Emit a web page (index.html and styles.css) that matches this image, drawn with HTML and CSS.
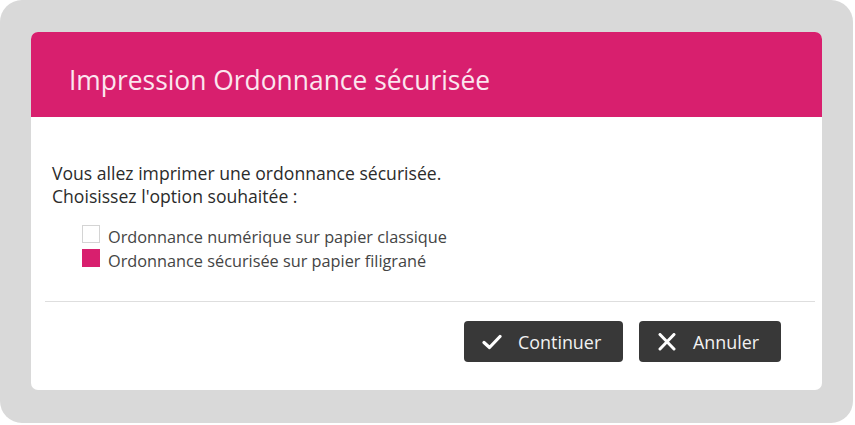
FILE: index.html
```html
<!DOCTYPE html>
<html lang="fr">
<head>
<meta charset="utf-8">
<title>Impression Ordonnance sécurisée</title>
<link rel="stylesheet" href="styles.css">
</head>
<body>
<div class="frame">
  <div class="dialog">
    <div class="header">
      <h1 class="title">Impression Ordonnance sécurisée</h1>
    </div>
    <div class="content">
      <p class="intro">Vous allez imprimer une ordonnance sécurisée.<br>Choisissez l'option souhaitée :</p>
      <ul class="options">
        <li class="option"><span class="box"></span><span>Ordonnance numérique sur papier classique</span></li>
        <li class="option"><span class="box checked"></span><span>Ordonnance sécurisée sur papier filigrané</span></li>
      </ul>
    </div>
    <div class="divider"></div>
    <div class="actions">
      <button class="btn btn-continue">
        <svg class="icon" width="20" height="16" viewBox="0 0 20 16"><path d="M2 8.5 L7.5 13.5 L18 2.5" fill="none" stroke="#fff" stroke-width="3.2" stroke-linecap="round" stroke-linejoin="round"/></svg>
        <span>Continuer</span>
      </button>
      <button class="btn btn-cancel">
        <svg class="icon" width="20" height="18" viewBox="0 0 20 18"><path d="M3 1.5 L17 16 M17 1.5 L3 16" fill="none" stroke="#fff" stroke-width="3" stroke-linecap="round"/></svg>
        <span>Annuler</span>
      </button>
    </div>
  </div>
</div>
</body>
</html>
```
FILE: styles.css
```css
* { box-sizing: border-box; }
html, body { margin: 0; padding: 0; background: #ffffff; }
body { font-family: "Open Sans", "Noto Sans", sans-serif; }

.frame {
  width: 853px;
  height: 423px;
  background: #d9d9d9;
  border-radius: 22px;
  padding: 32px 31px 33px 31px;
}

.dialog {
  background: #ffffff;
  border-radius: 7px;
  height: 358px;
  overflow: hidden;
  display: flex;
  flex-direction: column;
}

.header {
  background: #d81f6e;
  height: 85px;
  flex: none;
  padding: 33px 0 0 38px;
}

.title {
  margin: 0;
  font-weight: 400;
  font-size: 26.4px;
  line-height: 30px;
  color: #fbe6ef;
  white-space: nowrap;
}

.content {
  padding: 45px 0 0 21px;
  color: #2b2b2b;
}

.intro {
  margin: 0;
  font-size: 17.6px;
  line-height: 23px;
  white-space: nowrap;
}

.options {
  list-style: none;
  margin: 0;
  padding: 17px 0 0 30px;
}

.option {
  display: flex;
  align-items: flex-start;
  gap: 8px;
  height: 24px;
  font-size: 16.3px;
  line-height: 24px;
  color: #444;
  white-space: nowrap;
}

.box {
  width: 18px;
  height: 18px;
  border: 1px solid #d4d4d4;
  background: #fff;
  flex: none;
}

.box.checked {
  background: #d81f6e;
  border-color: #d81f6e;
}

.divider {
  height: 1px;
  flex: none;
  background: #dedede;
  margin: 28px 7px 0 14px;
}

.actions {
  display: flex;
  justify-content: flex-end;
  gap: 16px;
  padding: 19px 41px 0 0;
}

.btn {
  display: flex;
  align-items: center;
  height: 41px;
  border: none;
  border-radius: 4px;
  background: #383838;
  color: #f2f2f2;
  font-family: "Open Sans", "Noto Sans", sans-serif;
  font-size: 17.9px;
  padding: 0 0 0 18px;
  gap: 16px;
  cursor: pointer;
  white-space: nowrap;
}

.btn-continue { width: 159px; }
.btn-cancel { width: 142px; }

.icon { flex: none; display: block; }
```
